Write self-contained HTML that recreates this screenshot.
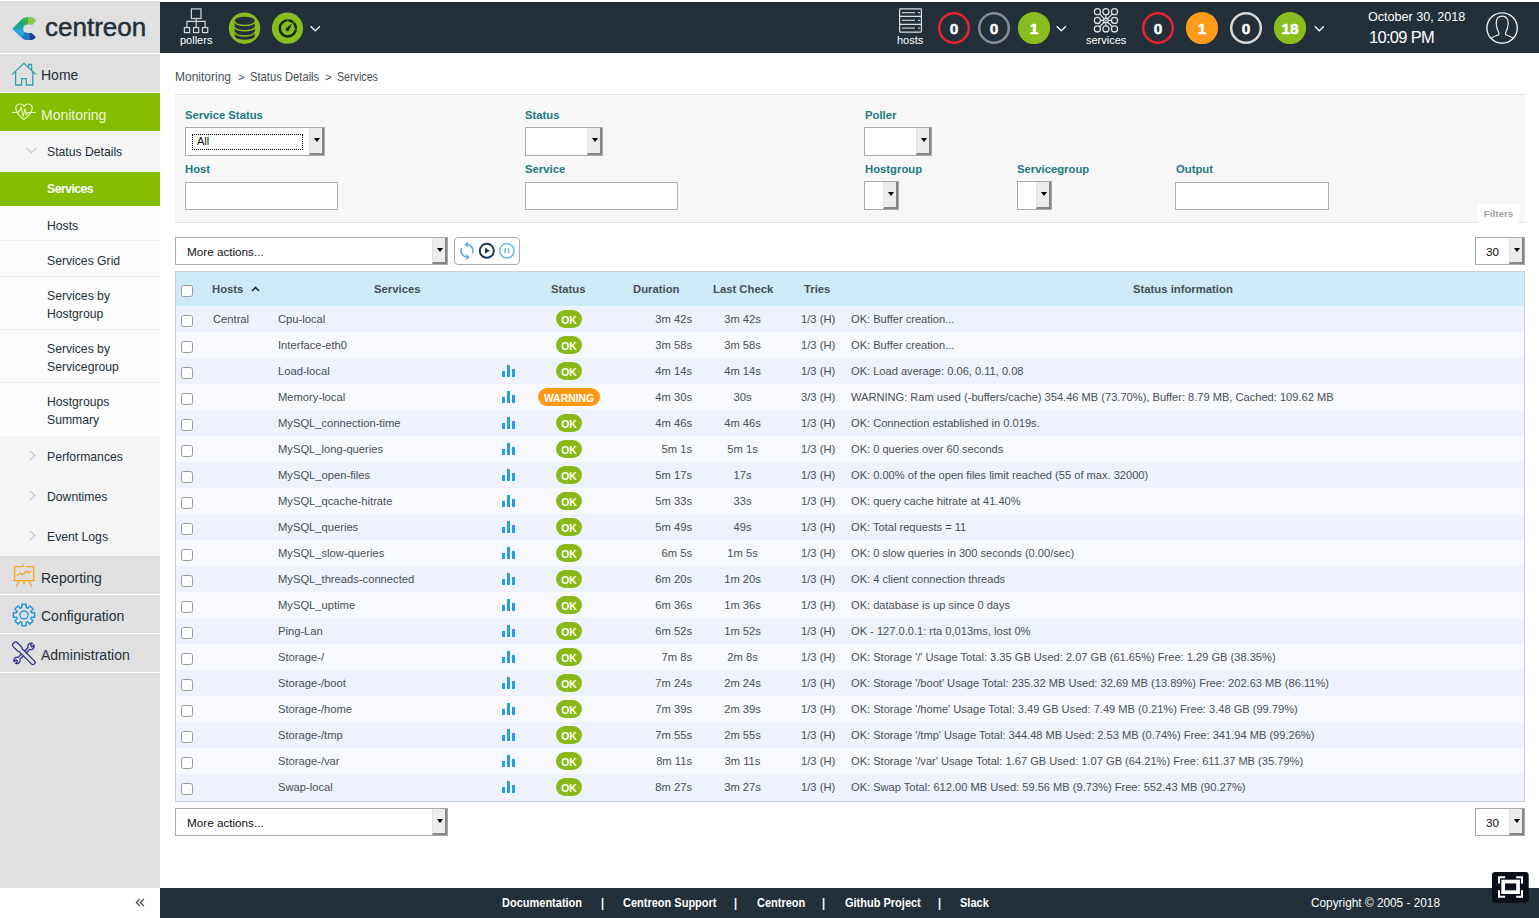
<!DOCTYPE html>
<html><head><meta charset="utf-8">
<style>
*{box-sizing:border-box;margin:0;padding:0}
html,body{width:1539px;height:918px;overflow:hidden;background:#fff;font-family:"Liberation Sans",sans-serif;color:#333}
i,b{font-style:normal;font-weight:normal}
.abs{position:absolute}
#side{position:absolute;left:0;top:0;width:160px;height:918px;background:#e0e0e0}
#top{position:absolute;left:160px;top:2px;width:1379px;height:51px;background:#232f39;color:#fff}
.mi{position:absolute;left:0;width:160px;font-size:14px;color:#232f39}
.mi span,.sub span{position:absolute}
.sub{position:absolute;left:0;width:160px;font-size:12.2px;color:#232f39;line-height:18px}
#foot{position:absolute;left:160px;top:888px;width:1379px;height:30px;background:#232f39;color:#fff;font-size:12.5px;font-weight:bold}
#foot span{position:absolute;top:0;line-height:30px;white-space:nowrap;transform:scaleX(0.88);transform-origin:0 0}
.lbl{position:absolute;font-size:11.3px;font-weight:bold;color:#217a7e;white-space:nowrap}
.sel{position:absolute;background:#fff;border:1px solid #a9a9a9}
.sel .btn{position:absolute;right:0;top:0;bottom:0;width:15px;background:#ececec;border-right:2px solid #858585;border-bottom:2px solid #858585;border-left:1px solid #e2e2e2}
.sel .btn:after{content:"";position:absolute;left:3.5px;top:50%;margin-top:-2.5px;border-left:3.5px solid transparent;border-right:3.5px solid transparent;border-top:4px solid #000}
.inp{position:absolute;background:#fff;border:1px solid #b0b0b0}
#tbl{position:absolute;left:175px;top:271px;width:1350px;height:531px;border:1px solid #c6ced8;background:#fff}
#th{position:absolute;left:0;top:0;width:1348px;height:34px;background:#cdebf6}
.h{position:absolute;top:0;line-height:34px;font-size:11.3px;font-weight:bold;color:#474f58;white-space:nowrap}
.r{position:absolute;left:0;width:1348px;height:26px}
.o{background:#edf2fc}
.e{background:#f7f9fe}
.t{position:absolute;top:0;line-height:26px;font-size:11.2px;color:#484f58;white-space:nowrap}
.cb{position:absolute;left:5px;top:9px;width:12px;height:12px;border:1px solid #9a9a9a;border-radius:2.5px;background:#fff}
.gr{position:absolute;left:326px;top:7px;width:13px;height:12px}
.gr b{position:absolute;width:3px;background:#2a9ddc}
.bd{position:absolute;top:4px;height:18px;line-height:21px;border-radius:9px;color:#fff;font-size:10.4px;font-weight:bold;text-align:center}
.ok{left:380px;width:26px;background:#88b917}
.wn{left:362px;width:62px;background:#ff9913}
.dur{right:832px;text-align:right}
.lc{left:516.5px;width:100px;text-align:center}
.tr{left:625px}
.inf{left:675px;font-size:11.1px}
.cnt{top:9px;width:34px;height:34px;line-height:34px;text-align:center;font-size:14px;font-weight:bold;color:#fff}
.hl{top:32px;font-size:11px;color:#fff;line-height:13px;white-space:nowrap}
.cnt{font-size:15.4px;top:10px;-webkit-text-stroke:0.5px #fff}

</style></head><body>
<div id="side">
  <svg class="abs" style="left:8px;top:13px" width="32" height="32" viewBox="8 13 32 32">
    <defs><clipPath id="cl"><path d="M12.3 28.7 L21.2 19.8 Q23.5 17.4 27 17.4 L31.2 17.4 Q34.3 17.5 35.7 20.6 L32.4 24.4 L28 24.3 Q23.2 24.5 23.2 28.7 Q23.2 33 28 33.1 L31.6 33.1 L35.7 36.9 Q34.5 39.8 31.4 39.9 L27 39.9 Q23.5 39.9 21.2 37.6 Z"/></clipPath></defs>
    <g clip-path="url(#cl)">
      <rect x="8" y="13" width="32" height="16" fill="#1ca591"/>
      <polygon points="18.5,13 28,13 28,25.5 25,25.5" fill="#3aae4a"/>
      <rect x="28" y="13" width="12" height="15.7" fill="#8cc540"/>
      <rect x="8" y="28.7" width="32" height="17" fill="#27a6de"/>
      <polygon points="25,32 29.5,32 29.5,45 24,45 21.5,38.5" fill="#2479bd"/>
      <rect x="29.5" y="28.7" width="11" height="17" fill="#2b3a92"/>
    </g>
  </svg>
  <span class="abs" style="left:45px;top:13px;font-size:26px;color:#232f39;line-height:28px;-webkit-text-stroke:0.5px #232f39">centreon</span>
  <div class="mi" style="top:0;height:1px;background:#fff"></div>
  <div class="mi" style="top:53px;height:1px;background:#fff"></div>
  <div class="mi" style="top:54px;height:38px"><svg class="abs" style="left:11px;top:8px" width="26" height="24" viewBox="0 0 26 24"><g fill="none" stroke="#2aa2ab" stroke-width="1.3"><path d="M1.2 12.4 L13 1.3 L24.8 12.4"/><path d="M17.6 5.6 V2.5 H20.6 V8.4"/><path d="M4.6 10 V23 H10.7 V16.6 H15.3 V23 H21.8 V10"/></g></svg><span style="left:41px;top:13px">Home</span></div>
  <div class="mi" style="top:92px;height:1px;background:#f3f6ea"></div><div class="mi" style="top:93px;height:38px;background:#84bd00;color:#eef6dc"><svg class="abs" style="left:11px;top:10px" width="26" height="18" viewBox="0 0 26 18"><g fill="none" stroke="#e2f5b8" stroke-width="1.2"><path d="M5.2 7.5 Q3.6 1.5 8.8 1 Q11.8 0.8 13 3.5 Q14.2 0.8 17.2 1 Q22.4 1.5 20.8 7.5 Q19 12 13 16.6 Q7 12 5.2 7.5"/><path d="M0.8 9.5 H6.8 L8.5 8 L10.2 4.5 L12 13.5 L14 6 L15.3 11.5 L16.8 9.5 H25"/></g></svg><span style="left:41px;top:13.5px">Monitoring</span></div>
  <div class="sub" style="top:131px;height:41px;background:#f5f5f5"><svg class="abs" style="left:26px;top:16px" width="11" height="7" viewBox="0 0 11 7"><path d="M0.6 0.8 L5.5 5.8 L10.4 0.8" fill="none" stroke="#c4c4c4" stroke-width="1.1"/></svg><span style="left:47px;top:11.5px">Status Details</span></div>
  <div class="sub" style="top:172px;height:34px;background:#84bd00;color:#fff;font-weight:bold"><span style="left:47px;top:8px;letter-spacing:-0.5px">Services</span></div>
  <div class="sub" style="top:206px;height:35px;background:#fcfcfc;border-bottom:1px solid #efefef"><span style="left:47px;top:10.5px">Hosts</span></div>
  <div class="sub" style="top:241px;height:36px;background:#fcfcfc;border-bottom:1px solid #efefef"><span style="left:47px;top:10.5px">Services Grid</span></div>
  <div class="sub" style="top:277px;height:53px;background:#fcfcfc;border-bottom:1px solid #efefef"><span style="left:47px;top:9.5px">Services by<br>Hostgroup</span></div>
  <div class="sub" style="top:330px;height:53px;background:#fcfcfc;border-bottom:1px solid #efefef"><span style="left:47px;top:9.5px">Services by<br>Servicegroup</span></div>
  <div class="sub" style="top:383px;height:53px;background:#fcfcfc"><span style="left:47px;top:9.5px">Hostgroups<br>Summary</span></div>
  <div class="sub" style="top:436px;height:120px;background:#f5f5f5">
    <svg class="abs" style="left:29px;top:14px" width="7" height="11" viewBox="0 0 7 11"><path d="M0.8 0.6 L5.8 5.5 L0.8 10.4" fill="none" stroke="#c4c4c4" stroke-width="1.1"/></svg><span style="left:47px;top:11.5px">Performances</span>
    <svg class="abs" style="left:29px;top:54px" width="7" height="11" viewBox="0 0 7 11"><path d="M0.8 0.6 L5.8 5.5 L0.8 10.4" fill="none" stroke="#c4c4c4" stroke-width="1.1"/></svg><span style="left:47px;top:51.5px">Downtimes</span>
    <svg class="abs" style="left:29px;top:94px" width="7" height="11" viewBox="0 0 7 11"><path d="M0.8 0.6 L5.8 5.5 L0.8 10.4" fill="none" stroke="#c4c4c4" stroke-width="1.1"/></svg><span style="left:47px;top:91.5px">Event Logs</span>
  </div>
  <div class="mi" style="top:556px;height:38px"><svg class="abs" style="left:9px;top:5px" width="30" height="30" viewBox="0 0 30 30"><g fill="none" stroke="#f5a623" stroke-width="1.35" stroke-linecap="round"><path d="M5.6 18.5 V5.6 H13.7 V3.4 M17.2 5.6 H24.6 V18.5"/><path d="M4.3 19.6 H25.6"/><path d="M9.8 20.5 L7.6 25.3 M20.2 20.5 L22.4 25.3 M15 20.5 V22.6"/><path d="M8.2 14.3 L11.2 12.2 L13.4 13.6 L17.6 10.2 L19.6 11.6 L21.5 10.4"/></g></svg><span style="left:41px;top:13.5px">Reporting</span></div>
  <div class="mi" style="top:594px;height:1px;background:#fff"></div>
  <div class="mi" style="top:595px;height:38px"><svg class="abs" style="left:12px;top:7.5px" width="24" height="24" viewBox="0 0 24 24"><g fill="none" stroke="#2a96d8" stroke-width="1.5" stroke-linejoin="round"><path d="M9.72 4.64 L9.83 1.32 L14.17 1.32 L14.28 4.64 L15.59 5.19 L18.02 2.91 L21.09 5.98 L18.81 8.41 L19.36 9.72 L22.68 9.83 L22.68 14.17 L19.36 14.28 L18.81 15.59 L21.09 18.02 L18.02 21.09 L15.59 18.81 L14.28 19.36 L14.17 22.68 L9.83 22.68 L9.72 19.36 L8.41 18.81 L5.98 21.09 L2.91 18.02 L5.19 15.59 L4.64 14.28 L1.32 14.17 L1.32 9.83 L4.64 9.72 L5.19 8.41 L2.91 5.98 L5.98 2.91 L8.41 5.19 Z"/><circle cx="12" cy="12" r="4"/></g></svg><span style="left:41px;top:12.5px">Configuration</span></div>
  <div class="mi" style="top:633px;height:1px;background:#fff"></div>
  <div class="mi" style="top:634px;height:38px"><svg class="abs" style="left:9px;top:5px" width="30" height="30" viewBox="0 0 30 30"><g fill="#e0e0e0" stroke="#2e2d8a" stroke-width="1.25" stroke-linejoin="round"><path transform="rotate(-45 15 14.35)" d="M7.97 13.05 L22.03 13.05 A3.2 3.2 0 0 1 27.94 13.20 L25.15 13.20 L25.15 15.50 L27.94 15.50 A3.2 3.2 0 0 1 22.03 15.65 L7.97 15.65 A3.2 3.2 0 0 1 2.06 15.50 L4.85 15.50 L4.85 13.20 L2.06 13.20 A3.2 3.2 0 0 1 7.97 13.05 Z"/><path transform="rotate(45 15.05 14.5)" d="M2.4 11.6 H8 Q9.2 11.6 10 12.4 H27.6 A2.1 2.1 0 0 1 27.6 16.6 H10 Q9.2 17.4 8 17.4 H2.4 A2 2 0 0 1 0.4 15.4 V13.6 A2 2 0 0 1 2.4 11.6 Z"/></g></svg><span style="left:41px;top:12.5px">Administration</span></div>
  <div class="mi" style="top:672px;height:1px;background:#fff"></div>
  <div class="mi" style="top:888px;height:30px;background:#fff"><svg class="abs" style="left:135px;top:10px" width="10" height="9" viewBox="0 0 10 9"><path d="M5 0.8 L1.3 4.5 L5 8.2 M9 0.8 L5.3 4.5 L9 8.2" fill="none" stroke="#444" stroke-width="1.2"/></svg></div>
</div>

<div id="top">
  <!-- pollers icon -->
  <svg class="abs" style="left:20px;top:4px" width="32" height="28" viewBox="0 0 32 28">
    <g fill="none" stroke="#d4d7da" stroke-width="1.2">
      <rect x="11.4" y="2.9" width="9.6" height="9.6"/>
      <path d="M16.2 12.5 V21.3 M6.9 21.3 V15.3 H25.1 V21.3"/>
      <rect x="4.4" y="21.6" width="5.2" height="5"/>
      <rect x="13.5" y="21.6" width="5.2" height="5"/>
      <rect x="22.5" y="21.6" width="5.2" height="5"/>
    </g>
  </svg>
  <span class="abs hl" style="left:20px">pollers</span>
  <!-- db circle -->
  <svg class="abs" style="left:68px;top:10px" width="33" height="33" viewBox="0 0 33 33">
    <circle cx="16.5" cy="16.2" r="15.7" fill="#88bd1f"/>
    <path d="M6.7 8.55 A10.05 3.85 0 0 1 26.8 8.55 V24.1 A10.05 3.7 0 0 1 6.7 24.1 Z" fill="#232f39"/>
    <g fill="none" stroke="#88bd1f" stroke-width="1.35">
      <path d="M6.7 9.6 A10.05 3.85 0 0 0 26.8 9.6"/>
      <path d="M6.7 14.9 A10.05 3.85 0 0 0 26.8 14.9"/>
      <path d="M6.7 20.1 A10.05 3.85 0 0 0 26.8 20.1"/>
    </g>
  </svg>
  <!-- gauge circle -->
  <svg class="abs" style="left:111px;top:10px" width="33" height="33" viewBox="0 0 33 33">
    <circle cx="16.5" cy="16.2" r="15.6" fill="#88bd1f"/>
    <circle cx="16.8" cy="16.4" r="8.05" fill="none" stroke="#15240c" stroke-width="2.5"/>
    <g stroke="#88bd1f" stroke-width="0.9"><path d="M16.8 7.5 V10 M23.1 10.1 L21.3 11.9 M25.6 17.3 H23.3"/></g>
    <path d="M14.9 16.6 L21.2 11.3 L17.6 18.9 Z" fill="#15240c"/><circle cx="16.3" cy="17.6" r="1.6" fill="#15240c"/>
  </svg>
  <svg class="abs" style="left:150px;top:23px" width="11" height="8" viewBox="0 0 11 8"><path d="M0.7 1.3 L5.3 5.8 L9.9 1.3" fill="none" stroke="#fff" stroke-width="1.2"/></svg>

  <!-- hosts icon -->
  <svg class="abs" style="left:738px;top:5px" width="26" height="28" viewBox="0 0 26 28">
    <g fill="none" stroke="#dcdfe2" stroke-width="1.2">
      <rect x="1.6" y="1.8" width="21.8" height="23.3" rx="0.8"/>
      <path d="M1.6 9.4 H23.4 M1.6 17.4 H23.4"/>
    </g>
    <g stroke="#c2c6ca" stroke-width="1.3"><path d="M4 5.7 H16.9 M4 13.4 H16.9 M4 21.2 H16.9"/><path d="M20 5.7 H22 M20 13.4 H22 M20 21.2 H22"/></g>
  </svg>
  <span class="abs hl" style="left:737px">hosts</span>
  <svg class="abs" style="left:777px;top:9px" width="34" height="34" viewBox="0 0 34 34"><circle cx="17" cy="17" r="14.8" fill="none" stroke="#e3262e" stroke-width="2.5"/></svg>
  <span class="abs cnt" style="left:777px">0</span>
  <svg class="abs" style="left:817px;top:9px" width="34" height="34" viewBox="0 0 34 34"><circle cx="17" cy="17" r="14.8" fill="none" stroke="#8a8d90" stroke-width="2.5"/></svg>
  <span class="abs cnt" style="left:817px">0</span>
  <svg class="abs" style="left:857px;top:9px" width="34" height="34" viewBox="0 0 34 34"><circle cx="17" cy="17" r="16.1" fill="#88bd1f"/></svg>
  <span class="abs cnt" style="left:857px">1</span>
  <svg class="abs" style="left:896px;top:23px" width="11" height="8" viewBox="0 0 11 8"><path d="M0.7 1.3 L5.3 5.8 L9.9 1.3" fill="none" stroke="#fff" stroke-width="1.2"/></svg>

  <!-- services icon -->
  <svg class="abs" style="left:932px;top:2px" width="28" height="30" viewBox="0 0 28 30">
    <g fill="none" stroke="#e2e4e6" stroke-width="1.2">
      <circle cx="5.4" cy="7.7" r="3.05"/><circle cx="13.9" cy="7.7" r="3.05"/><circle cx="22.5" cy="7.7" r="3.05"/>
      <circle cx="5.4" cy="16.4" r="3.05"/><circle cx="22.5" cy="16.4" r="3.05"/>
      <circle cx="5.4" cy="24.9" r="3.05"/><circle cx="13.9" cy="24.9" r="3.05"/><circle cx="22.5" cy="24.9" r="3.05"/>
      <circle cx="13.9" cy="16.4" r="2.2"/>
      <path d="M7.8 10.1 L12.3 14.8 M20.1 10.1 L15.5 14.8 M7.8 22.5 L12.3 18 M20.1 22.5 L15.5 18 M8.7 16.4 H11.7 M16.1 16.4 H19.2 M13.9 11 V14.2 M13.9 18.6 V21.6"/>
    </g>
    <circle cx="13.9" cy="16.4" r="0.9" fill="#e2e4e6"/>
  </svg>
  <span class="abs hl" style="left:926px">services</span>
  <svg class="abs" style="left:981px;top:9px" width="34" height="34" viewBox="0 0 34 34"><circle cx="17" cy="17" r="14.8" fill="none" stroke="#e3262e" stroke-width="2.5"/></svg>
  <span class="abs cnt" style="left:981px">0</span>
  <svg class="abs" style="left:1025px;top:9px" width="34" height="34" viewBox="0 0 34 34"><circle cx="17" cy="17" r="16.1" fill="#ff9a1a"/></svg>
  <span class="abs cnt" style="left:1025px">1</span>
  <svg class="abs" style="left:1069px;top:9px" width="34" height="34" viewBox="0 0 34 34"><circle cx="17" cy="17" r="14.8" fill="none" stroke="#d9d9d9" stroke-width="2.5"/></svg>
  <span class="abs cnt" style="left:1069px">0</span>
  <svg class="abs" style="left:1113px;top:9px" width="34" height="34" viewBox="0 0 34 34"><circle cx="17" cy="17" r="16.1" fill="#88bd1f"/></svg>
  <span class="abs cnt" style="left:1113px">18</span>
  <svg class="abs" style="left:1154px;top:23px" width="11" height="8" viewBox="0 0 11 8"><path d="M0.7 1.3 L5.3 5.8 L9.9 1.3" fill="none" stroke="#fff" stroke-width="1.2"/></svg>

  <span class="abs" style="left:1208px;top:8px;font-size:12.6px;line-height:15px;color:#fff;white-space:nowrap">October 30, 2018</span>
  <span class="abs" style="left:1209px;top:25px;font-size:16.5px;letter-spacing:-0.7px;line-height:20px;color:#fff;white-space:nowrap">10:09 PM</span>
  <svg class="abs" style="left:1325px;top:9px" width="34" height="34" viewBox="0 0 34 34">
    <circle cx="17.1" cy="17.05" r="15.2" fill="none" stroke="#eceeef" stroke-width="1.4"/>
    <path d="M5.8 27.6 Q8 25.6 13.8 23.8 V21.5 Q11.6 18 11.2 12.5 Q11.2 5.1 17.2 5.1 Q23.2 5.1 23.2 12.5 Q22.8 18 20.6 21.5 V23.8 Q26.4 25.6 28.4 27.6" fill="none" stroke="#eceeef" stroke-width="1.2"/>
  </svg>
</div>

<div class="abs" style="left:175px;top:68px;font-size:12px;color:#474f58;line-height:18px;white-space:nowrap">
<span class="abs" style="left:0">Monitoring</span><span class="abs" style="left:63px;font-size:11.5px">&gt;</span><span class="abs" style="left:75px;transform:scaleX(0.935);transform-origin:0 0">Status Details</span><span class="abs" style="left:150px;font-size:11.5px">&gt;</span><span class="abs" style="left:162px;transform:scaleX(0.89);transform-origin:0 0">Services</span></div>
<div class="abs" style="left:175px;top:94px;width:1350px;height:129px;background:#f7f7f7;border-top:1px solid #e4e4e4;border-bottom:1px solid #e4e4e4"></div>
<div class="abs" style="left:1478px;top:204px;width:41px;height:19px;background:#fff;color:#a3a3a8;font-size:9.8px;font-weight:bold;text-align:center;line-height:19px">Filters</div>
<span class="lbl" style="left:185px;top:109px">Service Status</span>
<span class="lbl" style="left:525px;top:109px">Status</span>
<span class="lbl" style="left:865px;top:109px">Poller</span>
<span class="lbl" style="left:185px;top:163px">Host</span>
<span class="lbl" style="left:525px;top:163px">Service</span>
<span class="lbl" style="left:865px;top:163px">Hostgroup</span>
<span class="lbl" style="left:1017px;top:163px">Servicegroup</span>
<span class="lbl" style="left:1176px;top:163px">Output</span>
<div class="sel" style="left:185px;top:127px;width:140px;height:29px"><div class="abs" style="left:6px;top:6px;width:111px;height:16px;border:1px dotted #000"></div><span class="abs" style="left:11px;top:7px;font-size:11px;color:#111">All</span><div class="btn"></div></div>
<div class="sel" style="left:525px;top:127px;width:78px;height:29px"><div class="btn"></div></div>
<div class="sel" style="left:864px;top:127px;width:68px;height:29px"><div class="btn"></div></div>
<div class="sel" style="left:864px;top:181px;width:35px;height:29px"><div class="btn"></div></div>
<div class="sel" style="left:1017px;top:181px;width:35px;height:29px"><div class="btn"></div></div>
<div class="inp" style="left:185px;top:182px;width:153px;height:28px"></div>
<div class="inp" style="left:525px;top:182px;width:153px;height:28px"></div>
<div class="inp" style="left:1175px;top:182px;width:154px;height:28px"></div>
<div class="sel" style="left:175px;top:237px;width:273px;height:28px"><span class="abs" style="left:11px;top:7px;font-size:11.7px;color:#111">More actions...</span><div class="btn"></div></div>
<div class="abs" style="left:454px;top:237px;width:66px;height:28px;border:1px solid #ababab;border-radius:4px;background:#fff"></div>
<svg class="abs" style="left:454px;top:237px" width="66" height="28" viewBox="0 0 66 28">
  <g fill="none" stroke="#5aaade" stroke-width="1.6"><path d="M13.3 7.8 A6 6 0 0 1 18.4 16.4"/><path d="M12.7 19.8 A6 6 0 0 1 7.6 11.2"/></g>
  <g fill="#5aaade"><path d="M10.3 7.6 L13.8 4.6 L13.8 10.6 Z"/><path d="M15.7 20 L12.2 17 L12.2 23 Z"/></g>
  <circle cx="32.8" cy="13.8" r="7" fill="none" stroke="#173a58" stroke-width="1.9"/>
  <path d="M31 10.8 L31 16.8 L35.8 13.8 Z" fill="#173a58"/>
  <circle cx="52.9" cy="13.8" r="7.2" fill="none" stroke="#6dbdeb" stroke-width="1.5"/>
  <g fill="#6dbdeb"><rect x="50.3" y="11.1" width="1.5" height="5.2"/><rect x="53.8" y="11.1" width="1.5" height="5.2"/></g>
</svg>
<div class="sel" style="left:1475px;top:237px;width:50px;height:28px"><span class="abs" style="left:10px;top:7px;font-size:11.7px;color:#111">30</span><div class="btn"></div></div>
<div class="sel" style="left:175px;top:808px;width:273px;height:28px"><span class="abs" style="left:11px;top:7px;font-size:11.7px;color:#111">More actions...</span><div class="btn"></div></div>
<div class="sel" style="left:1475px;top:808px;width:50px;height:28px"><span class="abs" style="left:10px;top:7px;font-size:11.7px;color:#111">30</span><div class="btn"></div></div>

<div id="tbl">
<div id="th"><i class="cb" style="top:13px"></i><span class="h" style="left:36px">Hosts</span><svg class="abs" style="left:75px;top:14px" width="9" height="6" viewBox="0 0 9 6"><path d="M1 5 L4.5 1.5 L8 5" fill="none" stroke="#232f39" stroke-width="1.6"/></svg><span class="h" style="left:198px">Services</span><span class="h" style="left:375px">Status</span><span class="h" style="left:457px">Duration</span><span class="h" style="left:537px">Last Check</span><span class="h" style="left:628px">Tries</span><span class="h" style="left:957px">Status information</span></div>
<div class="r o" style="top:34px;height:26px"><i class="cb"></i><span class="t" style="left:37px">Central</span><span class="t" style="left:102px">Cpu-local</span><i class="bd ok">OK</i><span class="t dur">3m 42s</span><span class="t lc">3m 42s</span><span class="t tr">1/3 (H)</span><span class="t inf">OK: Buffer creation...</span></div>
<div class="r e" style="top:60px;height:26px"><i class="cb"></i><span class="t" style="left:102px">Interface-eth0</span><i class="bd ok">OK</i><span class="t dur">3m 58s</span><span class="t lc">3m 58s</span><span class="t tr">1/3 (H)</span><span class="t inf">OK: Buffer creation...</span></div>
<div class="r o" style="top:86px;height:26px"><i class="cb"></i><span class="t" style="left:102px">Load-local</span><i class="gr"><b style="left:0;top:6px;height:6px"></b><b style="left:5px;top:0;height:12px"></b><b style="left:10px;top:4px;height:8px"></b></i><i class="bd ok">OK</i><span class="t dur">4m 14s</span><span class="t lc">4m 14s</span><span class="t tr">1/3 (H)</span><span class="t inf">OK: Load average: 0.06, 0.11, 0.08</span></div>
<div class="r e" style="top:112px;height:26px"><i class="cb"></i><span class="t" style="left:102px">Memory-local</span><i class="gr"><b style="left:0;top:6px;height:6px"></b><b style="left:5px;top:0;height:12px"></b><b style="left:10px;top:4px;height:8px"></b></i><i class="bd wn">WARNING</i><span class="t dur">4m 30s</span><span class="t lc">30s</span><span class="t tr">3/3 (H)</span><span class="t inf">WARNING: Ram used (-buffers/cache) 354.46 MB (73.70%), Buffer: 8.79 MB, Cached: 109.62 MB</span></div>
<div class="r o" style="top:138px;height:26px"><i class="cb"></i><span class="t" style="left:102px">MySQL_connection-time</span><i class="gr"><b style="left:0;top:6px;height:6px"></b><b style="left:5px;top:0;height:12px"></b><b style="left:10px;top:4px;height:8px"></b></i><i class="bd ok">OK</i><span class="t dur">4m 46s</span><span class="t lc">4m 46s</span><span class="t tr">1/3 (H)</span><span class="t inf">OK: Connection established in 0.019s.</span></div>
<div class="r e" style="top:164px;height:26px"><i class="cb"></i><span class="t" style="left:102px">MySQL_long-queries</span><i class="gr"><b style="left:0;top:6px;height:6px"></b><b style="left:5px;top:0;height:12px"></b><b style="left:10px;top:4px;height:8px"></b></i><i class="bd ok">OK</i><span class="t dur">5m 1s</span><span class="t lc">5m 1s</span><span class="t tr">1/3 (H)</span><span class="t inf">OK: 0 queries over 60 seconds</span></div>
<div class="r o" style="top:190px;height:26px"><i class="cb"></i><span class="t" style="left:102px">MySQL_open-files</span><i class="gr"><b style="left:0;top:6px;height:6px"></b><b style="left:5px;top:0;height:12px"></b><b style="left:10px;top:4px;height:8px"></b></i><i class="bd ok">OK</i><span class="t dur">5m 17s</span><span class="t lc">17s</span><span class="t tr">1/3 (H)</span><span class="t inf">OK: 0.00% of the open files limit reached (55 of max. 32000)</span></div>
<div class="r e" style="top:216px;height:26px"><i class="cb"></i><span class="t" style="left:102px">MySQL_qcache-hitrate</span><i class="gr"><b style="left:0;top:6px;height:6px"></b><b style="left:5px;top:0;height:12px"></b><b style="left:10px;top:4px;height:8px"></b></i><i class="bd ok">OK</i><span class="t dur">5m 33s</span><span class="t lc">33s</span><span class="t tr">1/3 (H)</span><span class="t inf">OK: query cache hitrate at 41.40%</span></div>
<div class="r o" style="top:242px;height:26px"><i class="cb"></i><span class="t" style="left:102px">MySQL_queries</span><i class="gr"><b style="left:0;top:6px;height:6px"></b><b style="left:5px;top:0;height:12px"></b><b style="left:10px;top:4px;height:8px"></b></i><i class="bd ok">OK</i><span class="t dur">5m 49s</span><span class="t lc">49s</span><span class="t tr">1/3 (H)</span><span class="t inf">OK: Total requests = 11</span></div>
<div class="r e" style="top:268px;height:26px"><i class="cb"></i><span class="t" style="left:102px">MySQL_slow-queries</span><i class="gr"><b style="left:0;top:6px;height:6px"></b><b style="left:5px;top:0;height:12px"></b><b style="left:10px;top:4px;height:8px"></b></i><i class="bd ok">OK</i><span class="t dur">6m 5s</span><span class="t lc">1m 5s</span><span class="t tr">1/3 (H)</span><span class="t inf">OK: 0 slow queries in 300 seconds (0.00/sec)</span></div>
<div class="r o" style="top:294px;height:26px"><i class="cb"></i><span class="t" style="left:102px">MySQL_threads-connected</span><i class="gr"><b style="left:0;top:6px;height:6px"></b><b style="left:5px;top:0;height:12px"></b><b style="left:10px;top:4px;height:8px"></b></i><i class="bd ok">OK</i><span class="t dur">6m 20s</span><span class="t lc">1m 20s</span><span class="t tr">1/3 (H)</span><span class="t inf">OK: 4 client connection threads</span></div>
<div class="r e" style="top:320px;height:26px"><i class="cb"></i><span class="t" style="left:102px">MySQL_uptime</span><i class="gr"><b style="left:0;top:6px;height:6px"></b><b style="left:5px;top:0;height:12px"></b><b style="left:10px;top:4px;height:8px"></b></i><i class="bd ok">OK</i><span class="t dur">6m 36s</span><span class="t lc">1m 36s</span><span class="t tr">1/3 (H)</span><span class="t inf">OK: database is up since 0 days</span></div>
<div class="r o" style="top:346px;height:26px"><i class="cb"></i><span class="t" style="left:102px">Ping-Lan</span><i class="gr"><b style="left:0;top:6px;height:6px"></b><b style="left:5px;top:0;height:12px"></b><b style="left:10px;top:4px;height:8px"></b></i><i class="bd ok">OK</i><span class="t dur">6m 52s</span><span class="t lc">1m 52s</span><span class="t tr">1/3 (H)</span><span class="t inf">OK - 127.0.0.1: rta 0,013ms, lost 0%</span></div>
<div class="r e" style="top:372px;height:26px"><i class="cb"></i><span class="t" style="left:102px">Storage-/</span><i class="gr"><b style="left:0;top:6px;height:6px"></b><b style="left:5px;top:0;height:12px"></b><b style="left:10px;top:4px;height:8px"></b></i><i class="bd ok">OK</i><span class="t dur">7m 8s</span><span class="t lc">2m 8s</span><span class="t tr">1/3 (H)</span><span class="t inf">OK: Storage '/' Usage Total: 3.35 GB Used: 2.07 GB (61.65%) Free: 1.29 GB (38.35%)</span></div>
<div class="r o" style="top:398px;height:26px"><i class="cb"></i><span class="t" style="left:102px">Storage-/boot</span><i class="gr"><b style="left:0;top:6px;height:6px"></b><b style="left:5px;top:0;height:12px"></b><b style="left:10px;top:4px;height:8px"></b></i><i class="bd ok">OK</i><span class="t dur">7m 24s</span><span class="t lc">2m 24s</span><span class="t tr">1/3 (H)</span><span class="t inf">OK: Storage '/boot' Usage Total: 235.32 MB Used: 32.69 MB (13.89%) Free: 202.63 MB (86.11%)</span></div>
<div class="r e" style="top:424px;height:26px"><i class="cb"></i><span class="t" style="left:102px">Storage-/home</span><i class="gr"><b style="left:0;top:6px;height:6px"></b><b style="left:5px;top:0;height:12px"></b><b style="left:10px;top:4px;height:8px"></b></i><i class="bd ok">OK</i><span class="t dur">7m 39s</span><span class="t lc">2m 39s</span><span class="t tr">1/3 (H)</span><span class="t inf">OK: Storage '/home' Usage Total: 3.49 GB Used: 7.49 MB (0.21%) Free: 3.48 GB (99.79%)</span></div>
<div class="r o" style="top:450px;height:26px"><i class="cb"></i><span class="t" style="left:102px">Storage-/tmp</span><i class="gr"><b style="left:0;top:6px;height:6px"></b><b style="left:5px;top:0;height:12px"></b><b style="left:10px;top:4px;height:8px"></b></i><i class="bd ok">OK</i><span class="t dur">7m 55s</span><span class="t lc">2m 55s</span><span class="t tr">1/3 (H)</span><span class="t inf">OK: Storage '/tmp' Usage Total: 344.48 MB Used: 2.53 MB (0.74%) Free: 341.94 MB (99.26%)</span></div>
<div class="r e" style="top:476px;height:26px"><i class="cb"></i><span class="t" style="left:102px">Storage-/var</span><i class="gr"><b style="left:0;top:6px;height:6px"></b><b style="left:5px;top:0;height:12px"></b><b style="left:10px;top:4px;height:8px"></b></i><i class="bd ok">OK</i><span class="t dur">8m 11s</span><span class="t lc">3m 11s</span><span class="t tr">1/3 (H)</span><span class="t inf">OK: Storage '/var' Usage Total: 1.67 GB Used: 1.07 GB (64.21%) Free: 611.37 MB (35.79%)</span></div>
<div class="r o" style="top:502px;height:27px"><i class="cb"></i><span class="t" style="left:102px">Swap-local</span><i class="gr"><b style="left:0;top:6px;height:6px"></b><b style="left:5px;top:0;height:12px"></b><b style="left:10px;top:4px;height:8px"></b></i><i class="bd ok">OK</i><span class="t dur">8m 27s</span><span class="t lc">3m 27s</span><span class="t tr">1/3 (H)</span><span class="t inf">OK: Swap Total: 612.00 MB Used: 59.56 MB (9.73%) Free: 552.43 MB (90.27%)</span></div>

</div>
<div id="foot">
<span style="left:341.6px">Documentation</span><span style="left:440.5px">|</span>
<span style="left:463px">Centreon Support</span><span style="left:574px">|</span>
<span style="left:596.6px">Centreon</span><span style="left:662px">|</span>
<span style="left:685px">Github Project</span><span style="left:778px">|</span>
<span style="left:800.2px">Slack</span>
<span style="left:1151px;font-weight:normal;transform:scaleX(0.946)">Copyright © 2005 - 2018</span>
</div>
<svg class="abs" style="left:1492px;top:872px" width="37" height="31" viewBox="0 0 37 31">
  <rect x="0" y="0" width="36.7" height="30.7" rx="3.2" fill="#0a0e16"/>
  <g fill="none" stroke="#fff" stroke-width="2">
    <path d="M7 11.6 V5.2 H13.1 M24.2 5.2 H30 V11.6 M7 18.2 V24.8 H13.1 M24.2 24.8 H30 V18.2"/>
  </g>
  <rect x="11.15" y="9.55" width="14.9" height="10.6" fill="none" stroke="#fff" stroke-width="3.7"/>
</svg>

</body></html>
